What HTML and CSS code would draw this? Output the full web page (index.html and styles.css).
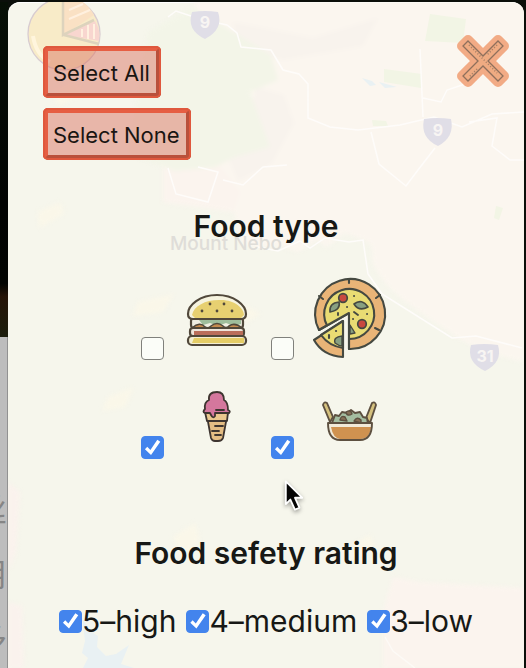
FILE: index.html
```
<!DOCTYPE html>
<html lang="en">
<head>
<meta charset="utf-8">
<meta name="viewport" content="width=device-width, initial-scale=1">
<title>Food filter</title>
<link rel="stylesheet" href="styles.css">
</head>
<body>
<aside class="edge" lang="zh" aria-hidden="true">
  <div class="photo"></div>
  <div class="rail"><span>丝</span><span>用</span><span>多</span></div>
</aside>
<main class="panel">
  <svg class="map" viewBox="0 0 516 666" preserveAspectRatio="xMidYMin slice" aria-hidden="true">
    <g class="land">
    <path fill="#fbf6ef" d="M185 0H516V360Q470 350 447 334C420 314 382 294 370 270C358 258 370 250 360 240L337 231L318 246L310 238L290 250L272 244L245 246L232 240L225 205L155 200V152L190 158L235 130L246 80L205 35Z"/>
    <path fill="#fbf4ee" d="M155 155H205L232 190L225 210L155 200ZM385 575L412 580L516 586V666H375V610Z"/>
    <path fill="#f8f3ed" d="M225 20l80 16 65-20-15 28-80 14-45-12ZM248 85l28 8 10 28-22 40-34 18-10-25 20-25Z"/>
    <path fill="#faf2ed" d="M0 480l12 10-4 60-8 20ZM0 600l14 4 2 62H0Z"/>
    <g fill="#f3f5e8"><path d="M140 30l45-25 45 28 33 20 7 25-28 12 20 55-35 10-20 10-40 4-47-18Z"/></g>
    <g fill="#faf7e9"><path d="M45 90l24-12 6 14-25 12ZM210 320l28-16 15 8-30 17ZM100 395l26-10-9 20-23 4ZM165 535l22-14 5 17-18 20ZM30 210l22-10 4 12-25 14ZM130 300l36-8-11 18-30 4ZM340 545l22-12 6 12-25 14Z"/></g>
    </g>
    <g fill="#f2f5e5"><path d="M422 12l36 5-3 24-38-2ZM376 67l38 5-1 14-37-6ZM364 118l14 1 2 5h-15ZM488 204l7 2-4 12-5-2Z"/></g>
    <g fill="none" stroke="#fefcfa" stroke-width="1.500">
      <path d="M160 15l8-6 24 8 27 6 10 8 4 14 30 3 12 20 16 4 9 10v34l22 9 28 3 42-5 34-8 28 10 30-13 32-2M363 130l8 32 27 22 12-16 17-22M412 47l3 68M415 96l18 4 6-12 24-8M461 120l28-4-5 28 18 14h14M160 166l8 26 32 8 10-30-20-5M215 178l20 5 20-18 24-2M250 245l20 4 22-10 10 7 15-10 24 4 14-2 5 34 14 20 70 44 24-2 46 12"/>
      <path d="M377 635l8 14 22 17" opacity=".7"/>
    </g>
    <g fill="#e9f1f3"><path d="M354 76l10 3 4 4-6 1ZM371 80l18 5-12 1ZM74 616l8 13 8 5-1 11 9 9 10-2 13-9-8 19 13 4H75l5-10-6-5 3-12Z"/></g>
    <g class="shield"><path d="M184 10q13-2 26 0q6 17-13 27q-19-9-13-27Z"/><path d="M416 117q13-2 27 0q4 18-13 27q-18-8-14-27Z"/><path d="M463 343q13-2 27 0q5 17-13 26q-19-9-14-26Z"/></g>
    <g class="route"><text x="197" y="26">9</text><text x="430" y="134">9</text><text x="477" y="360">31</text></g>
    <text class="place" x="162" y="248">Mount Nebo</text>
    <g stroke="#d8ccd0" stroke-width="1.300"><circle cx="56" cy="32" r="36" fill="#f8ebc8"/><path fill="#fae1c4" stroke="none" d="M56 33V-4q20-2 30 17Z"/><path fill="#f8d6cf" stroke="none" d="M56 33l31-14q6 10 4 20Z"/><path fill="none" stroke="#ddd3bd" stroke-width="2.500" d="M55-4v37L86 18M56 33l35 9"/><path fill="none" stroke="#fff0df" stroke-width="2" d="M61 8l14-6M61 17l21-9M74 27v8M80 23v14M86 22v15"/><path fill="none" stroke="#fff5dd" stroke-width="4" d="M25 34q3 19 17 26"/></g>
  </svg>

  <header class="toolbar">
    <div class="actions">
      <button class="action" type="button">Select All</button>
      <button class="action" type="button">Select None</button>
    </div>
    <button class="close" type="button" aria-label="Close">
      <svg viewBox="0 0 52 52"><path fill="#f2ab85" stroke="#f2ab85" stroke-width="10" stroke-linejoin="round" d="M11 5l15 15L41 5l6 6-15 15 15 15-6 6-15-15-15 15-6-6 15-15L5 11Z"/><path fill="#efab82" stroke="#8f705c" stroke-width="1.300" d="M11 6l15 15L41 6l5 5-15 15 15 15-5 5-15-15-15 15-5-5 15-15L6 11Z"/><path fill="none" stroke="#a57f65" stroke-width="1.600" stroke-dasharray="1 2" d="M12 10l28 28M40 10L30 20M20 34L12 42"/></svg>
    </button>
  </header>

  <section>
    <h2>Food type</h2>
    <div class="foods">
      <label class="food"><input type="checkbox" aria-label="Burger">
        <svg viewBox="0 0 90 88" aria-hidden="true"><g stroke="#51483b" stroke-width="2.200" stroke-linejoin="round">
          <rect x="19" y="46" width="52" height="10" rx="3" fill="#f0eee2"/><path stroke="none" fill="#9fbd9c" d="M27 48h42v4l-7 2-8-3-8 3-8-3-7 2Z"/><path fill="#c58a4f" stroke-width="1.600" d="M20 56q8-7 13-1q3 2 6-1q6-5 12 0q3 3 6 0q6-4 13 2Z"/>
          <rect x="18" y="56" width="54" height="8" rx="3" fill="#efe5da"/><path stroke="none" fill="#ba6e5a" d="M22 59h49v4H22Z"/>
          <rect x="16" y="64" width="58" height="9" rx="4" fill="#f3eed1"/><path stroke="none" fill="#e5cd66" d="M22 66h50v5H20Z"/>
          <path fill="#f6f3df" d="M45 23c17 0 29 10 29 19q0 5-5 5H21q-5 0-5-5c0-9 12-19 29-19Z"/><path stroke="none" fill="#e7d071" d="M47 28c15-1 25 8 25 15l-3 3H23l-3-3c2-9 13-15 27-15Z"/></g>
          <g fill="#51483b"><circle cx="38" cy="32" r="1.400"/><circle cx="52" cy="32" r="1.400"/><circle cx="30" cy="39" r="1.400"/><circle cx="45" cy="39" r="1.400"/><circle cx="60" cy="39" r="1.400"/></g></svg>
      </label>
      <label class="food"><input type="checkbox" aria-label="Pizza">
        <svg viewBox="0 0 90 88" aria-hidden="true"><g stroke="#454941" stroke-width="2.100" stroke-linejoin="round" stroke-linecap="round" transform="translate(-1 1)">
          <path fill="#e9b477" d="M48 40L18 57A35 35 0 1 1 48 76Z"/><path fill="#e9dc73" stroke="none" d="M48 40L26 52.500A25 25 0 1 1 48 66Z"/><path fill="none" d="M26 52.500A25 25 0 1 1 48 66M18 57L48 40V76"/>
          <path fill="none" d="M48 6v4M18 23l4 3M79 22l-4 3M78 57l-4-2"/>
          <path fill="#879f81" stroke-width="1.600" d="M29 39q-1-9 9-10q2 8-9 10Z"/><path fill="#879f81" stroke-width="1.600" d="M53 31q8-6 14 3q-9 5-14-3Z"/>
          <path fill="#879f81" stroke-width="1.400" d="M49 52l5 8-5 1Z"/><circle cx="42" cy="25" r="4.300" fill="#c94a3f" stroke-width="1.700"/><circle cx="61" cy="51" r="4.300" fill="#c94a3f" stroke-width="1.700"/>
          <path fill="none" stroke-width="1.900" d="M53 23h.1M46 34h.1M37 40v2M53 39l4 3M66 41h.1M52 46h.1"/>
          <path fill="#e9b477" d="M42 48L13 67Q22 83 42 84Z"/><path fill="#e9dc73" d="M42 48L20 62Q28 73 42 75Z"/><path fill="#879f81" stroke-width="1.400" d="M41 63q-9 1-7 7q4 3 7 3Z"/><path fill="none" d="M28 62v3M35 58h.1"/>
        </g></svg>
      </label>
      <label class="food"><input type="checkbox" aria-label="Ice cream" checked>
        <svg viewBox="0 0 90 88" aria-hidden="true"><g stroke="#3e3530" stroke-width="1.800" stroke-linejoin="round" stroke-linecap="round">
          <path fill="#e4bd84" d="M34 40H56L51 67Q50 70 46 70H43Q40 70 39 67Z"/><path fill="#eac88e" d="M33 41H56L55 50H35Z"/>
          <path fill="none" d="M43 55h8M40 60h7M43 64h6"/><path fill="#d4779d" d="M37 29q-1-8 8-8q7 0 7 8q4 2 4 10q3 1 1 3H43v3q-2 3-4-1l-1-2h-5q-3-1 0-4q-1-7 4-9Z"/><path fill="none" d="M44 39h8"/>
        </g></svg>
      </label>
      <label class="food"><input type="checkbox" aria-label="Rice bowl" checked>
        <svg viewBox="0 0 90 88" aria-hidden="true"><g stroke="#5d5040" stroke-width="1.900" stroke-linejoin="round" transform="translate(1 0)">
          <path fill="#d5c17e" d="M20 34q1-4 4-2l6 14-3 5ZM73 34q-1-4-4-2l-6 15 4 5Z"/>
          <path fill="#a4bda0" d="M29 52l3-8 4 1 3-4 5 1 4-3 4 3 5-1 3 5 4 1 1 6Z"/><path fill="#867056" stroke-width="1.400" d="M43 41q5-3 6 2q-5 3-6-2ZM37 49q1-5 5-3l2 4ZM51 50q3-5 7-1v3Z"/>
          <path fill="#f1ead9" stroke="none" d="M25 52H69Q69 69 57 69H37Q25 69 25 52Z"/><path fill="#cf9250" stroke="none" d="M28 56H68Q67 68 57 68H37Q30 67 28 56Z"/><path fill="none" d="M25 52H69Q69 69 57 69H37Q25 69 25 52Z"/>
        </g></svg>
      </label>
    </div>
  </section>

  <section>
    <h2>Food sefety rating</h2>
    <div class="ratings">
      <label><input type="checkbox" checked>5–high</label>
      <label><input type="checkbox" checked>4–medium</label>
      <label><input type="checkbox" checked>3–low</label>
    </div>
  </section>
  <svg class="pointer" viewBox="0 0 22 34" aria-hidden="true"><path d="M2 2V27L7 22L12 33L17 31L12 20H20Z" fill="#050505" stroke="#fff" stroke-width="2" stroke-linejoin="round"/></svg>
</main>
</body>
</html>
```
FILE: styles.css
```
* { box-sizing: border-box; }

body {
  margin: 0;
  min-height: 100vh;
  display: grid;
  grid-template-columns: 8px minmax(0, 1fr);
  padding: 2px 2px 0 0;
  background: #0b0f0a;
  color: #171815;
  font-family: Inter, "Noto Sans CJK SC", sans-serif;
  overflow: hidden;
}

.edge {
  display: flex;
  flex-direction: column;
  overflow: hidden;
}
.photo {
  flex: 1;
  background: linear-gradient(#071006, #020402 60%, #030502 84%, #251407 88%, #1b1d0c);
}
.rail {
  flex: 0 0 331px;
  display: flex;
  flex-direction: column;
  align-items: flex-end;
  gap: 32px;
  padding-top: 158px;
  background: #bdbdbd;
  border-right: 1px solid #929292;
  color: #858585;
  font-size: 32px;
  line-height: 32px;
}

.panel {
  position: relative;
  padding: 44px 15px 24px 35px;
  overflow: hidden;
  background: #f6f6ec;
  border-radius: 12px 12px 0 0;
  box-shadow: inset 0 1px #ffffff;
}
.map {
  position: absolute;
  inset: 0;
  width: 100%;
  height: 100%;
}
.land { filter: blur(2px); }
.shield { fill: #e0dee7; }
.route {
  fill: #f8f5f3;
  font-size: 16px;
  font-weight: 700;
  text-anchor: middle;
}
.place {
  fill: #dfddd8;
  font-size: 19px;
  font-weight: 500;
}

.toolbar, section { position: relative; }
.toolbar {
  display: flex;
  justify-content: space-between;
  align-items: flex-start;
}
.actions {
  display: flex;
  flex-direction: column;
  align-items: flex-start;
  gap: 10px;
}
.action {
  height: 52px;
  padding: 1px 6px 0 5px;
  border: 5px solid;
  border-color: #e65e43 #b9503b #b9503b #e65e43;
  outline: 2px solid #df583d;
  outline-offset: -2px;
  border-radius: 5px;
  background: rgba(218, 112, 97, 0.48);
  background-clip: padding-box;
  color: #1a1512;
  font: 22px/28px Inter, sans-serif;
}
.close {
  width: 52px;
  height: 52px;
  margin: -11px 0 0;
  padding: 0;
  border: 0;
  background: none;
}
.close svg { display: block; width: 100%; }

section {
  margin-left: -35px;
  margin-right: -15px;
}
h2 {
  margin: 0;
  padding-top: 48px;
  font-size: 30px;
  line-height: 36px;
  font-weight: 600;
  text-align: center;
}

.foods {
  display: grid;
  grid-template-columns: 130px 130px;
  justify-content: center;
  row-gap: 11px;
  margin-top: 28px;
}
.food {
  display: flex;
  align-items: flex-end;
  gap: 8px;
  padding-left: 5px;
}
.food svg {
  width: 90px;
  height: 88px;
}

input[type="checkbox"] {
  appearance: none;
  flex: none;
  width: 23px;
  height: 23px;
  margin: 0;
  border: 1px solid #80817c;
  border-radius: 4px;
  background: #fbfdf8;
}
input[type="checkbox"]:checked {
  border-color: #4384ed;
  background: #4384ed;
}
input[type="checkbox"]:checked::before {
  content: "";
  display: block;
  height: 100%;
  background: #fff;
  clip-path: polygon(14% 58%, 25% 46%, 40% 62%, 73% 13%, 87% 23%, 43% 86%);
}

section + section h2 { padding-top: 76px; }
.ratings {
  display: flex;
  justify-content: center;
  gap: 10px;
  margin-top: 32px;
  font-size: 30px;
  line-height: 36px;
}
.ratings label {
  display: flex;
  align-items: center;
}

.pointer {
  position: absolute;
  left: 276px;
  top: 477px;
  width: 20px;
  height: 32px;
  filter: drop-shadow(0 2px 2px rgba(0, 0, 0, 0.35));
}
```
